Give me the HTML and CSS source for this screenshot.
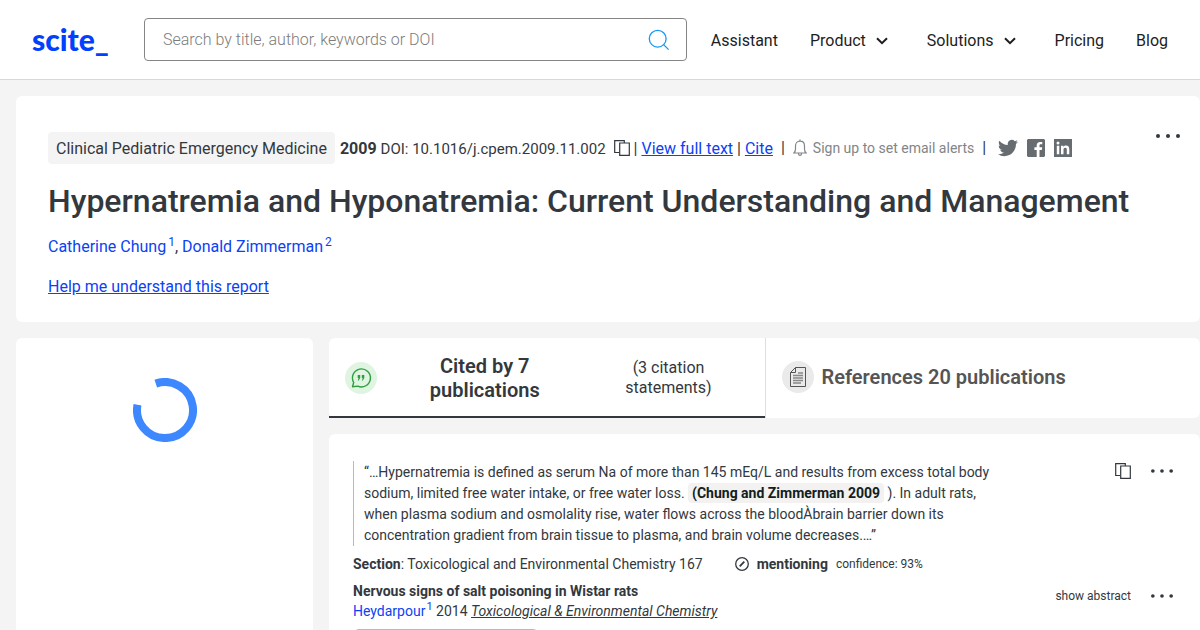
FILE: index.html
```html
<!DOCTYPE html>
<html lang="en">
<head>
<meta charset="utf-8">
<title>Hypernatremia and Hyponatremia: Current Understanding and Management</title>
<link rel="stylesheet" href="styles.css">
</head>
<body>
<svg class="defs" width="0" height="0" aria-hidden="true">
  <symbol id="copy" viewBox="0 0 16 16"><path d="M5 12.5H.7V.7h9.6V3M5.7 3h9.6v12.3H5.7z" fill="none" stroke="currentColor" stroke-width="1.2"/></symbol>
  <symbol id="dots" viewBox="0 0 24 6"><circle cx="2" cy="3" r="2"/><circle cx="12" cy="3" r="2"/><circle cx="22" cy="3" r="2"/></symbol>
  <symbol id="chevron" viewBox="0 0 12 8"><path d="M1 1.2l5 5 5-5" fill="none" stroke="currentColor" stroke-width="2"/></symbol>
</svg>
<header class="header">
  <a class="logo" href="#">scite_</a>
  <form class="search">
    <input class="search-input" type="text" aria-label="Search" placeholder="Search by title, author, keywords or DOI">
    <button class="icon-button" type="button" aria-label="Submit search">
      <svg width="22" height="22" viewBox="0 0 22 22" fill="none" stroke="#1499f5" stroke-width="1.3"><circle cx="9.7" cy="9.7" r="8.4"/><path d="M15.6 15.6l5 5"/></svg>
    </button>
  </form>
  <nav class="nav">
    <a href="#">Assistant</a>
    <button type="button">Product <svg width="12" height="8"><use href="#chevron"/></svg></button>
    <button type="button">Solutions <svg width="12" height="8"><use href="#chevron"/></svg></button>
    <a href="#">Pricing</a>
    <a href="#">Blog</a>
  </nav>
</header>
<main class="main">
  <section class="card hero">
    <div class="meta-row">
      <div class="meta">
        <span class="journal">Clinical Pediatric Emergency Medicine</span>
        <span class="doi"><b>2009</b> <span class="doi-value">DOI: 10.1016/j.cpem.2009.11.002</span></span>
        <button class="icon-button copy-doi" type="button" aria-label="Copy DOI"><svg width="16" height="16"><use href="#copy"/></svg></button>
        <span class="links">| <a href="#">View full text</a> | <a href="#">Cite</a></span>
        <span>|</span>
        <button class="alerts" type="button">
          <svg width="14" height="18" viewBox="0 0 14 18" fill="none" stroke="currentColor" stroke-width="1.2"><path d="M.8 14h12.4c-1.2-1-1.7-2.200-1.700-4V7c0-2.800-1.700-4.800-4.500-4.800S2.500 4.200 2.500 7v3c0 1.800-.5 3-1.700 4zM7 2.200V.4M5.500 14.500c0 2.600 3 2.600 3 0"/></svg>
          Sign up to set email alerts
        </button>
        <span>|</span>
        <span class="social">
          <a href="#" aria-label="Twitter"><svg width="20" height="18" viewBox="0 2 24 20"><path d="M23.950 4.570a10 10 0 0 1-2.820.77 4.960 4.960 0 0 0 2.160-2.720c-.95.550-2 .950-3.130 1.180a4.920 4.920 0 0 0-8.380 4.480C7.690 8.090 4.070 6.130 1.640 3.160a4.820 4.820 0 0 0-.67 2.480c0 1.710.87 3.210 2.190 4.100a4.900 4.900 0 0 1-2.230-.62v.06a4.920 4.920 0 0 0 3.950 4.830 5 5 0 0 1-2.210.08 4.940 4.940 0 0 0 4.600 3.420A9.870 9.870 0 0 1 0 19.540a14 14 0 0 0 7.550 2.210c9.050 0 14-7.500 14-13.980 0-.21 0-.42-.02-.63a9.940 9.940 0 0 0 2.420-2.570z"/></svg></a>
          <a href="#" aria-label="Facebook"><svg width="18" height="18" viewBox="0 0 18 18"><path d="M1 0h16l1 1v16l-1 1h-4.500v-7h2.300l.4-2.700h-2.700V6.600c0-.9.400-1.300 1.400-1.300h1.400V2.900h-2.200c-2.300 0-3.400 1.400-3.400 3.400v2H7.400V11h2.300v7H1l-1-1V1z"/></svg></a>
          <a href="#" aria-label="LinkedIn"><svg width="18" height="18" viewBox="0 0 18 18"><path d="M0 0h18v18H0z"/><circle cx="4" cy="4" r="1.500" fill="#fff"/><path d="M2.800 6.800h2.500v8.500H2.800zM7 6.800h2.400V8c.6-.9 1.400-1.400 2.600-1.400 2.400 0 3.300 1.400 3.300 3.900v4.800h-2.500V11c0-1.300-.3-2.200-1.500-2.200S9.500 9.700 9.500 11v4.300H7z" fill="#fff"/></svg></a>
        </span>
      </div>
      <button class="icon-button hero-more" type="button" aria-label="More options"><svg width="24" height="6"><use href="#dots"/></svg></button>
    </div>
    <h1>Hypernatremia and Hyponatremia: Current Understanding and Management</h1>
    <p class="authors"><a href="#">Catherine Chung<sup>1</sup></a>, <a href="#">Donald Zimmerman<sup>2</sup></a></p>
    <p class="help"><a href="#">Help me understand this report</a></p>
  </section>
  <div class="columns">
    <aside class="card side">
      <svg width="64" height="64" viewBox="0 0 64 64" role="img" aria-label="Loading"><path d="M22.800 5.600A28 28 0 1 1 4.500 26.800" fill="none" stroke="#3d87ff" stroke-width="8"/></svg>
    </aside>
    <div class="content">
      <div class="tabs">
        <button class="tab tab-active" type="button">
          <svg width="32" height="32" viewBox="0 0 32 32"><circle cx="16" cy="16" r="16" fill="#dff5e1"/><path d="M7.500 24.700l1.200-4.200a9 9 0 1 1 4 3.600z" fill="none" stroke="#2f9e41" stroke-width="1.400" stroke-linejoin="round"/><path d="M12.700 13h2.500v3l-1.500 2.400h-.9l.8-2.400h-.9zM16.800 13h2.500v3l-1.500 2.400h-.9l.8-2.400h-.9z" fill="#2f9e41"/></svg>
          <strong>Cited by 7 publications</strong>
          <span class="statements">(3 citation statements)</span>
        </button>
        <button class="tab tab-refs" type="button">
          <svg width="32" height="32" viewBox="0 0 32 32"><circle cx="16" cy="16" r="16" fill="#eaeaea"/><path d="M13.500 6.500h10v19h-15v-14l5-5v5h-5" fill="none" stroke="#555"/><path d="M16 12h5M11 14.500h10M11 17h10M11 19.500h10M11 22h8" stroke="#888" stroke-width="1.300"/></svg>
          <strong>References 20 publications</strong>
        </button>
      </div>
      <article class="card citation">
        <div class="row">
          <blockquote>“…Hypernatremia is defined as serum Na of more than 145 mEq/L and results from excess total body<br>sodium, limited free water intake, or free water loss. <mark>(Chung and Zimmerman 2009</mark> ). In adult rats,<br>when plasma sodium and osmolality rise, water flows across the bloodÀbrain barrier down its<br>concentration gradient from brain tissue to plasma, and brain volume decreases.…”</blockquote>
          <div class="actions">
            <button class="icon-button" type="button" aria-label="Copy statement"><svg width="16" height="16"><use href="#copy"/></svg></button>
            <button class="icon-button" type="button" aria-label="More options"><svg width="22" height="6"><use href="#dots"/></svg></button>
          </div>
        </div>
        <div class="section-row">
          <span class="section"><b>Section</b>: Toxicological and Environmental Chemistry 167</span>
          <span class="kind"><svg width="14" height="14" viewBox="0 0 14 14" fill="none" stroke="currentColor" stroke-width="1.300"><circle cx="7" cy="7" r="6.300"/><path d="M4.700 9.300l4.600-4.600" stroke-width="1.800"/></svg><b>mentioning</b></span>
          <small>confidence: 93%</small>
        </div>
        <div class="row">
          <div class="paper">
            <h2>Nervous signs of salt poisoning in Wistar rats</h2>
            <p><a class="author" href="#">Heydarpour<sup>1</sup></a> 2014 <a class="venue" href="#">Toxicological &amp; Environmental Chemistry</a></p>
          </div>
          <div class="actions">
            <button class="abstract" type="button">show abstract</button>
            <button class="icon-button" type="button" aria-label="More options"><svg width="22" height="6"><use href="#dots"/></svg></button>
          </div>
        </div>
        <div class="tally"></div>
      </article>
    </div>
  </div>
</main>
</body>
</html>
```
FILE: styles.css
```css
* { box-sizing: border-box; }
body {
  margin: 0;
  height: 100vh;
  overflow: hidden;
  background: #f4f4f4;
  color: #32383e;
  font: 16px/24px Roboto, "Liberation Sans", sans-serif;
  display: flex;
  flex-direction: column;
}
h1, h2, p, blockquote { margin: 0; }
a { color: #0b42f5; }
button {
  font: inherit;
  color: inherit;
  background: none;
  border: 0;
  padding: 0;
  cursor: pointer;
}
svg { display: block; flex: none; fill: currentColor; }
svg[fill="none"] { fill: none; }
.defs { position: absolute; }
sup { line-height: 0; }
.icon-button { display: flex; }

.header {
  flex: none;
  height: 80px;
  display: flex;
  align-items: center;
  padding: 0 32px;
  background: #fff;
  border-bottom: 1px solid #d8d8d8;
}
.logo {
  width: 112px;
  padding-bottom: 2px;
  color: #0040ff;
  font: 900 30px/32px Lato, sans-serif;
  text-decoration: none;
}
.search {
  flex: 1;
  display: flex;
  align-items: center;
  height: 43px;
  margin-right: 24px;
  padding: 0 16px 0 18px;
  border: 1px solid #858585;
  border-radius: 4px;
}
.search-input {
  flex: 1;
  min-width: 0;
  border: 0;
  padding: 0;
  outline: 0;
  background: none;
  font: 300 16px/24px Roboto, sans-serif;
}
.search-input::placeholder { color: #7c7c7c; opacity: 1; }
.nav { display: flex; gap: 32px; padding-top: 2px; color: #1d1d1f; }
.nav a { color: inherit; text-decoration: none; }
.nav button { display: flex; align-items: center; gap: 10px; margin-right: 7px; }

.main {
  flex: 1;
  display: flex;
  flex-direction: column;
  gap: 16px;
  padding: 16px 0 0 16px;
}
.card { background: #fff; border-radius: 6px; }
.hero { padding: 36px 20px 23px 32px; }
.meta-row { display: flex; justify-content: space-between; align-items: flex-start; }
.meta { display: flex; align-items: center; gap: 8px; white-space: nowrap; }
.journal, .doi, .links { padding: 5px 0 3px; }
.journal { padding-left: 8px; padding-right: 8px; border-radius: 4px; background: #f4f4f4; }
.doi { margin-left: -3px; }
.doi-value { font-size: 15px; }
.copy-doi { margin-right: -4px; }
.alerts { display: flex; align-items: center; gap: 6px; font-size: 14px; color: #818588; }
.social { display: flex; align-items: center; gap: 9px; margin-left: 4px; }
.social a { color: #666c70; }
.hero-more { padding-top: 1px; }
h1 { margin-top: 17px; font-size: 32px; line-height: 40px; font-weight: 500; }
.authors { margin-top: 14px; }
.authors a { text-decoration: none; }
.authors sup { font-size: 12px; margin-left: 2px; }
.help { margin-top: 16px; }

.columns {
  flex: 1;
  display: grid;
  grid-template-columns: 297px minmax(0, 1fr);
  gap: 16px;
}
.side { display: flex; justify-content: center; align-items: flex-start; padding-top: 40px; }
.content { display: flex; flex-direction: column; gap: 16px; }
.tabs {
  display: grid;
  grid-template-columns: minmax(0, 1fr) minmax(0, 1fr);
  height: 80px;
  background: #fff;
  border-radius: 6px;
}
.tab { display: flex; align-items: center; padding: 0 16px; }
.tab strong { font-size: 20px; line-height: 24px; font-weight: 600; }
.tab-active { justify-content: space-between; padding-right: 48px; box-shadow: inset 0 -2px #32383e; }
.tab-active strong { width: 124px; }
.statements { width: 96px; line-height: 20px; }
.tab-active strong { margin-right: 28px; }
.tab-refs { gap: 8px; padding-bottom: 2px; border-left: 1px solid #dedede; color: #555; }

.citation { flex: 1; padding: 27px 27px 0 24px; font-size: 14px; line-height: 20px; }
.row { display: flex; justify-content: space-between; align-items: flex-start; }
blockquote {
  padding: 1px 0 0 10px;
  border-left: 1px solid #b9b9b9;
  line-height: 21px;
  white-space: nowrap;
}
mark {
  padding: 2px 4px;
  border-radius: 4px;
  background: #f3f2f1;
  color: #12201b;
  font-weight: 700;
}
.actions { display: flex; align-items: center; gap: 20px; }
.section-row { display: flex; align-items: center; margin: 8px 0 7px; gap: 8px; }
.kind { display: flex; align-items: center; gap: 8px; margin-left: 24px; }
small, .abstract { font-size: 12px; }
.row .actions { min-height: 20px; }
.paper + .actions { padding-top: 5px; }
h2 { font-size: 14px; line-height: 20px; font-weight: 700; }
.author { text-decoration: none; }
.author sup { font-size: 11px; margin-left: 1px; }
.venue { color: inherit; font-style: italic; }
.tally { width: 186px; height: 32px; margin-top: 8px; border: 1px solid #b9b9b9; border-radius: 6px; }
```
